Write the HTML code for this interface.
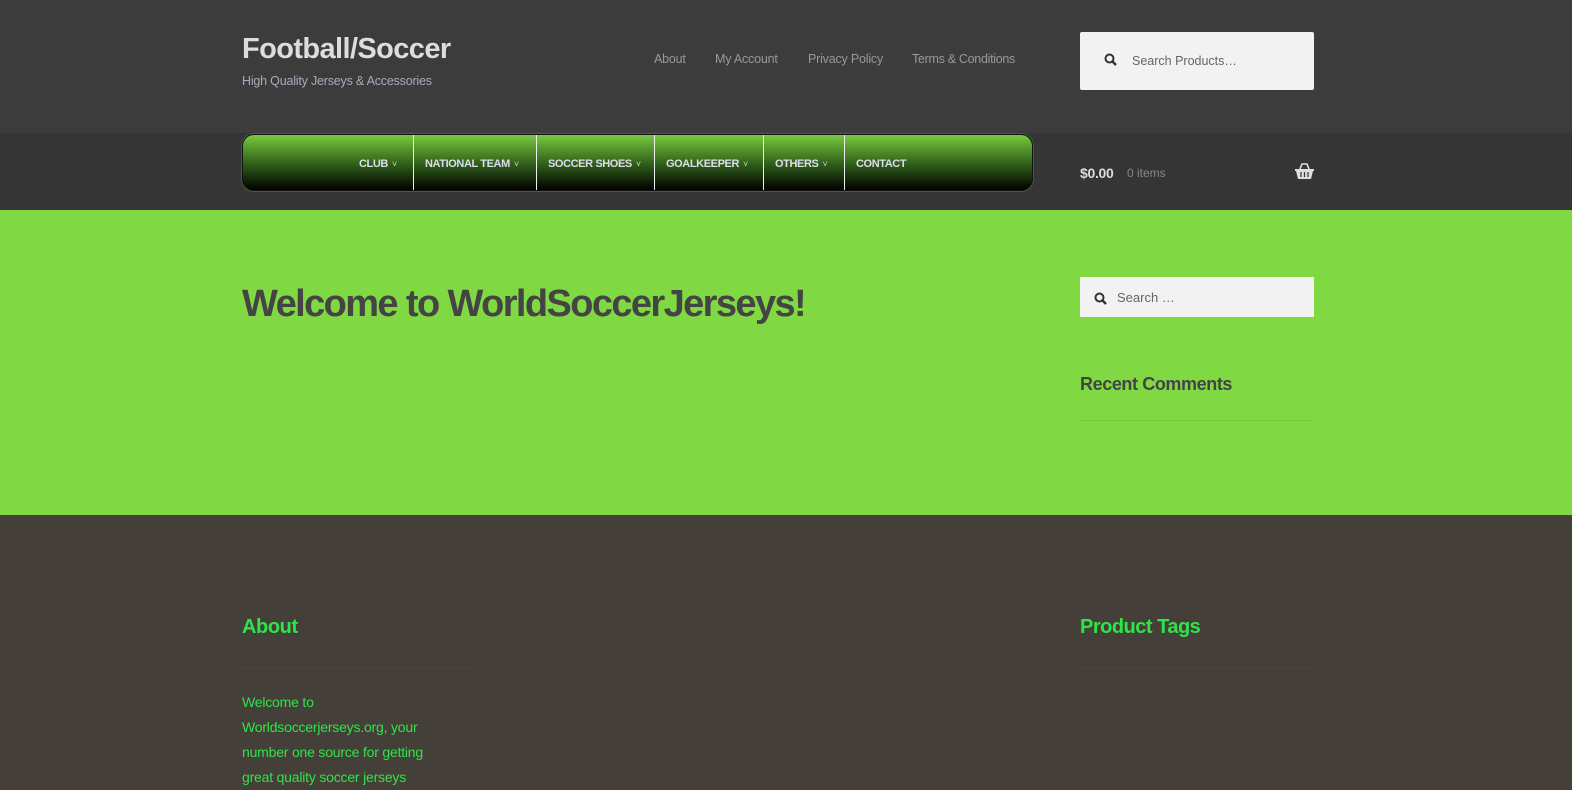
<!DOCTYPE html>
<html><head><meta charset="utf-8"><style>
*{margin:0;padding:0;box-sizing:border-box}
body{width:1572px;height:776px;overflow:hidden;font-family:"Liberation Sans",sans-serif;background:#444039}
.top{position:absolute;left:0;top:0;width:1572px;height:133px;background:#3c3c3c}
.nav{position:absolute;left:0;top:133px;width:1572px;height:78px;background:#353535}
.main{position:absolute;left:0;top:210px;width:1572px;height:305px;background:#80d843}
.t{position:absolute;white-space:nowrap}
.menu{position:absolute;left:242px;top:134px;width:791px;height:57px;border:1px solid #111;border-radius:12px;background:linear-gradient(#79c940,#2d5a18 55%,#000);box-shadow:0 0 0 1px #7ac94044}
.mi{position:absolute;top:2px;height:55px;line-height:55px;color:#dde;font-size:11px;font-weight:bold;letter-spacing:-0.4px}
.mi span{font-weight:normal;font-size:9px;margin-left:4px;color:#ccc}
.sep{position:absolute;top:0;width:1px;height:55px;background:#eee}
</style></head><body>
<div class="top"></div><div class="nav"></div><div class="main"></div>
<div class="t" style="left:242px;top:33px;font-size:29px;font-weight:bold;color:#ddd;letter-spacing:-0.6px">Football/Soccer</div>
<div class="t" style="left:242px;top:74px;font-size:12.5px;color:#aab;letter-spacing:-0.2px">High Quality Jerseys &amp; Accessories</div>
<div class="t" style="left:654px;top:52px;font-size:12.5px;color:#999;letter-spacing:-0.2px">About</div>
<div class="t" style="left:715px;top:52px;font-size:12.5px;color:#999;letter-spacing:-0.2px">My Account</div>
<div class="t" style="left:808px;top:52px;font-size:12.5px;color:#999;letter-spacing:-0.2px">Privacy Policy</div>
<div class="t" style="left:912px;top:52px;font-size:12.5px;color:#999;letter-spacing:-0.3px">Terms &amp; Conditions</div>
<div style="position:absolute;left:1080px;top:32px;width:234px;height:58px;background:#f2f2f2;border-radius:2px"></div>
<svg style="position:absolute;left:1104px;top:53px" width="13" height="13" viewBox="0 0 13 13"><circle cx="5.5" cy="5.5" r="4" fill="none" stroke="#333" stroke-width="2"/><path d="M8.5 8.5L12 12" stroke="#333" stroke-width="2.4"/></svg>
<div class="t" style="left:1132px;top:54px;font-size:12.5px;color:#666">Search Products…</div>
<div class="menu">
<div class="mi" style="left:116px">CLUB<span>˅</span></div>
<div class="sep" style="left:170px"></div>
<div class="mi" style="left:182px">NATIONAL TEAM<span>˅</span></div>
<div class="sep" style="left:293px"></div>
<div class="mi" style="left:305px">SOCCER SHOES<span>˅</span></div>
<div class="sep" style="left:411px"></div>
<div class="mi" style="left:423px">GOALKEEPER<span>˅</span></div>
<div class="sep" style="left:520px"></div>
<div class="mi" style="left:532px">OTHERS<span>˅</span></div>
<div class="sep" style="left:601px"></div>
<div class="mi" style="left:613px">CONTACT</div>
</div>
<div class="t" style="left:1080px;top:165px;font-size:14px;font-weight:bold;color:#ddd;letter-spacing:-0.3px">$0.00</div>
<div class="t" style="left:1127px;top:166px;font-size:12px;color:#888">0 items</div>
<svg style="position:absolute;left:1295px;top:163px" width="19" height="17" viewBox="0 0 19 17"><path d="M5 6L7 1H12L14 6" fill="none" stroke="#ddd" stroke-width="1.6"/><path d="M0 6H19V8H18L16 16H3L1 8H0Z" fill="#ddd"/><path d="M6 9V14M9.5 9V14M13 9V14" stroke="#353535" stroke-width="1.2"/></svg>
<div class="t" style="left:242px;top:283px;font-size:38px;font-weight:bold;color:#444;letter-spacing:-1.6px">Welcome to WorldSoccerJerseys!</div>
<div style="position:absolute;left:1080px;top:277px;width:234px;height:40px;background:#f2f2f2"></div>
<svg style="position:absolute;left:1094px;top:292px" width="13" height="13" viewBox="0 0 13 13"><circle cx="5.5" cy="5.5" r="4" fill="none" stroke="#333" stroke-width="2"/><path d="M8.5 8.5L12 12" stroke="#333" stroke-width="2.4"/></svg>
<div class="t" style="left:1117px;top:290px;font-size:13px;color:#666">Search …</div>
<div class="t" style="left:1080px;top:374px;font-size:18px;font-weight:bold;color:#444;letter-spacing:-0.4px">Recent Comments</div>
<div style="position:absolute;left:1080px;top:420px;width:234px;height:1px;background:#78cc3e"></div>
<div class="t" style="left:242px;top:616px;font-size:20px;font-weight:bold;color:#2fe34a;letter-spacing:-0.4px">About</div>
<div style="position:absolute;left:242px;top:667px;width:230px;height:1px;background:#4b4740"></div>
<div class="t" style="left:1080px;top:616px;font-size:20px;font-weight:bold;color:#2fe34a;letter-spacing:-0.5px">Product Tags</div>
<div style="position:absolute;left:1080px;top:667px;width:234px;height:1px;background:#4b4740"></div>
<div class="t" style="left:242px;top:690px;font-size:14px;line-height:25px;color:#2fe34a;letter-spacing:-0.2px">Welcome to<br>Worldsoccerjerseys.org, your<br>number one source for getting<br>great quality soccer jerseys</div>
</body></html>
